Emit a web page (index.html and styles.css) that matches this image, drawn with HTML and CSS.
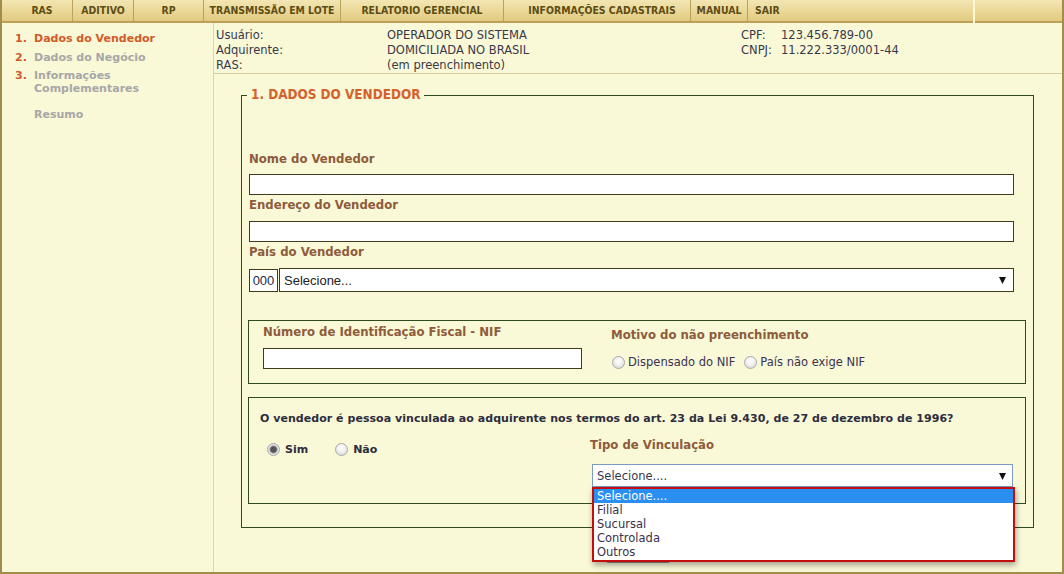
FILE: index.html
```html
<!DOCTYPE html>
<html lang="pt-BR">
<head>
<meta charset="utf-8">
<title>RAS - Dados do Vendedor</title>
<link rel="stylesheet" href="styles.css">
</head>
<body>
<div class="frame">
  <nav class="topnav">
    <div class="menu">
      <a class="mi mi-ras">RAS</a>
      <a class="mi mi-adit">ADITIVO</a>
      <a class="mi mi-rp">RP</a>
      <a class="mi mi-trans">TRANSMISSÃO EM LOTE</a>
      <a class="mi mi-rel">RELATORIO GERENCIAL</a>
      <a class="mi mi-info">INFORMAÇÕES CADASTRAIS</a>
      <a class="mi mi-man">MANUAL</a>
      <a class="mi mi-sair">SAIR</a>
    </div>
    <div class="menu-end"></div>
  </nav>
  <div class="main">
    <aside class="side">
      <div class="step active"><span class="num">1.</span><span class="txt">Dados do Vendedor</span></div>
      <div class="step"><span class="num">2.</span><span class="txt">Dados do Negócio</span></div>
      <div class="step s3"><span class="num">3.</span><span class="txt">Informações<br>Complementares</span></div>
      <div class="step resumo"><span class="num"></span><span class="txt">Resumo</span></div>
    </aside>
    <section class="content">
      <div class="info">
        <span>Usuário:</span><span>OPERADOR DO SISTEMA</span><span>CPF:</span><span>123.456.789-00</span>
        <span>Adquirente:</span><span>DOMICILIADA NO BRASIL</span><span>CNPJ:</span><span>11.222.333/0001-44</span>
        <span>RAS:</span><span>(em preenchimento)</span><span></span><span></span>
      </div>
      <div class="form-area">
        <fieldset class="fs">
          <legend>1. DADOS DO VENDEDOR</legend>
          <label class="lbl">Nome do Vendedor</label>
          <div class="inp"></div>
          <label class="lbl">Endereço do Vendedor</label>
          <div class="inp"></div>
          <label class="lbl">País do Vendedor</label>
          <div class="pais-row">
            <div class="code">000</div>
            <div class="sel sel-pais"><span>Selecione...</span><svg class="arrow" width="7" height="8" viewBox="0 0 7 8"><polygon points="0,1 7,1 3.5,8" fill="#111"/></svg></div>
          </div>

          <div class="box nif">
            <div class="nif-col">
              <div class="lbl">Número de Identificação Fiscal - NIF</div>
              <div class="inp inp-nif"></div>
            </div>
            <div class="mot-col">
              <div class="lbl">Motivo do não preenchimento</div>
              <div class="radios">
                <span class="radio"></span><span class="rtxt">Dispensado do NIF</span>
                <span class="radio r2"></span><span class="rtxt">País não exige NIF</span>
              </div>
            </div>
          </div>

          <div class="box vinc">
            <p class="question">O vendedor é pessoa vinculada ao adquirente nos termos do art. 23 da Lei 9.430, de 27 de dezembro de 1996?</p>
            <div class="vinc-row">
              <div class="sim-nao">
                <span class="radio checked"></span><span class="rb">Sim</span>
                <span class="radio r-nao"></span><span class="rb">Não</span>
              </div>
              <div class="tipo-col">
                <div class="lbl">Tipo de Vinculação</div>
                <div class="vsel-wrap">
                  <div class="sel sel-vinc"><span>Selecione....</span><svg class="arrow" width="7" height="8" viewBox="0 0 7 8"><polygon points="0,1 7,1 3.5,8" fill="#111"/></svg></div>
                  <ul class="dropdown">
                    <li class="hl">Selecione....</li>
                    <li>Filial</li>
                    <li>Sucursal</li>
                    <li>Controlada</li>
                    <li>Outros</li>
                  </ul>
                </div>
              </div>
            </div>
          </div>
        </fieldset>
        <div class="actions"><button class="btn" aria-label="Avançar"></button></div>
      </div>
    </section>
  </div>
</div>
</body>
</html>
```
FILE: styles.css
```css
* { box-sizing: border-box; }
html, body { margin: 0; padding: 0; }
body {
  width: 1064px;
  height: 574px;
  overflow: hidden;
  background: #f9f8d7;
  font-family: "DejaVu Sans", Verdana, sans-serif;
  font-size: 11.5px;
  color: #38384a;
}
.frame {
  height: 574px;
  border: 2px solid #a28c4c;
  border-top: 0;
  display: flex;
  flex-direction: column;
}

/* top menu */
.topnav { display: flex; height: 23px; flex: none; }
.menu {
  display: flex;
  width: 971px;
  height: 23px;
  background: linear-gradient(#f3e6b3, #e2cb80);
  border-bottom: 2px solid #bba257;
}
.menu-end {
  flex: 1;
  margin-left: 2px;
  height: 23px;
  background: linear-gradient(#f3e6b3, #e2cb80);
  border-bottom: 2px solid #bba257;
}
.mi {
  display: block;
  height: 21px;
  line-height: 21px;
  text-align: center;
  border-right: 1px solid #b9a25a;
  font-family: "DejaVu Sans Condensed", "DejaVu Sans", sans-serif;
  font-stretch: condensed;
  font-weight: bold;
  font-size: 10.4px;
  color: #5d4d14;
  white-space: nowrap;
}
.mi-ras { width: 71px; padding-left: 10px; }
.mi-adit { width: 61px; }
.mi-rp { width: 70px; }
.mi-trans { width: 137px; }
.mi-rel { width: 163px; }
.mi-info { width: 187px; padding-left: 10px; }
.mi-man { width: 57px; }
.mi-sair { flex: 1; border-right: 0; text-align: left; padding-left: 7px; }

/* main */
.main {
  flex: 1;
  display: grid;
  grid-template-columns: 212px 1fr;
  min-height: 0;
}
.side {
  border-right: 1px solid #ddd5ab;
  padding: 9px 0 0 13px;
  font-weight: bold;
  font-size: 11px;
}
.step {
  display: grid;
  grid-template-columns: 19px 1fr;
  line-height: 13px;
  margin-bottom: 6px;
  color: #a7a7a7;
}
.step .num { color: #d15a2b; }
.step.active .txt { color: #d15a2b; }
.step.s3 { margin-top: -1px; }
.step.resumo { margin-top: 13px; }

.content { position: relative; }
.info {
  display: grid;
  grid-template-columns: 171px 354px 40px 1fr;
  grid-auto-rows: 15px;
  line-height: 15px;
  padding: 5px 0 0 2px;
  height: 51px;
  border-bottom: 1px solid #d6cda2;
}

.form-area { padding: 0 28px 0 27px; }
.fs {
  margin: 13px 0 0 0;
  padding: 46px 7px 23px 6px;
  border: 1px solid #2f4a1c;
  min-width: 0;
}
.fs legend {
  padding: 0 4px;
  margin-left: -1px;
  line-height: 16px;
  font-family: "DejaVu Sans Condensed", "DejaVu Sans", sans-serif;
  font-stretch: condensed;
  font-weight: bold;
  font-size: 13.4px;
  color: #d4622e;
}
.lbl {
  display: block;
  line-height: 18px;
  margin: 0 0 7px 1px;
  font-family: "DejaVu Sans Condensed", "DejaVu Sans", sans-serif;
  font-stretch: condensed;
  font-weight: bold;
  font-size: 13px;
  color: #8e5b3b;
  white-space: nowrap;
}
.fs > .lbl:first-of-type { margin-top: 1px; margin-bottom: 6px; }
.inp {
  width: 765px;
  height: 21px;
  margin: 0 0 1px 1px;
  background: #fff;
  border: 1px solid #3f3b1d;
}
.pais-row { display: flex; gap: 1px; margin-left: 1px; height: 24px; }
.code {
  width: 29px;
  height: 23px;
  margin-top: 1px;
  border: 1px solid #3f3b1d;
  background: #fff;
  font-family: "Liberation Sans", Arial, sans-serif;
  font-size: 13px;
  line-height: 21px;
  text-align: center;
  color: #1d2a4a;
}
.sel {
  display: flex;
  align-items: center;
  justify-content: space-between;
  background: #fff;
  border: 1px solid #3f3b1d;
}
.sel-pais {
  width: 735px;
  height: 24px;
  padding: 0 7px 0 4px;
  font-family: "Liberation Sans", Arial, sans-serif;
  font-size: 13px;
  color: #222;
}
.arrow { display: block; }

.box { border: 1px solid #2f4a1c; }
.nif {
  margin-top: 28px;
  display: flex;
  gap: 29px;
  padding: 2px 0 14px 14px;
}
.nif-col { width: 319px; }
.nif-col .lbl { margin-left: 0; }
.inp-nif { width: 319px; margin: 0; }
.mot-col { padding-top: 3px; }
.mot-col .lbl { margin: 0; }
.radios {
  display: flex;
  align-items: center;
  margin-top: 11px;
  height: 14px;
  padding-left: 1px;
}
.radio {
  display: inline-block;
  width: 13px;
  height: 13px;
  border-radius: 50%;
  border: 1px solid #a9a9a9;
  background: radial-gradient(circle at 50% 35%, #ffffff 0%, #f0f0f0 45%, #cfcfcf 100%);
  flex: none;
}
.radio.checked {
  background: radial-gradient(circle at 50% 50%, #555 0, #555 2.5px, #8a8a8a 3.5px, #e8e8e8 4.5px, #d0d0d0 100%);
}
.rtxt { margin-left: 3px; color: #3a3450; }
.r2 { margin-left: 9px; }

.vinc {
  margin-top: 13px;
  padding: 13px 0 16px 11px;
}
.question {
  margin: 0;
  line-height: 16px;
  font-weight: bold;
  font-size: 11px;
  letter-spacing: 0.04px;
  color: #2d2d3d;
  white-space: nowrap;
}
.vinc-row { display: flex; margin-top: 9px; }
.sim-nao {
  width: 330px;
  display: flex;
  align-items: center;
  height: 14px;
  margin-top: 6px;
  padding-left: 7px;
}
.rb { margin-left: 5px; font-weight: bold; font-size: 11px; color: #2d2d3d; }
.r-nao { margin-left: 27px; }
.tipo-col .lbl { margin: 0; }
.vsel-wrap { position: relative; margin: 10px 0 0 2px; width: 421px; }
.sel-vinc {
  width: 421px;
  height: 23px;
  border-color: #7b9ac4;
  padding: 0 6px 0 4px;
  color: #38384a;
}
.dropdown {
  position: absolute;
  top: 100%;
  left: 0;
  width: 423px;
  margin: 0;
  padding: 0 0 1px 0;
  list-style: none;
  background: #fff;
  border: 2px solid #c20e0e;
  box-shadow: 1px 3px 6px rgba(0, 0, 0, 0.35);
  z-index: 5;
}
.dropdown li {
  line-height: 14px;
  height: 14px;
  padding-left: 3px;
  color: #38304a;
}
.dropdown li.hl { background: #2a8ff0; color: #fff; }

.actions { display: flex; justify-content: center; padding-top: 12px; }
.btn {
  width: 64px;
  height: 23px;
  background: linear-gradient(#f4f4f4, #dcdcdc);
  border: 1px solid #8e8e8e;
  border-radius: 2px;
}
```
